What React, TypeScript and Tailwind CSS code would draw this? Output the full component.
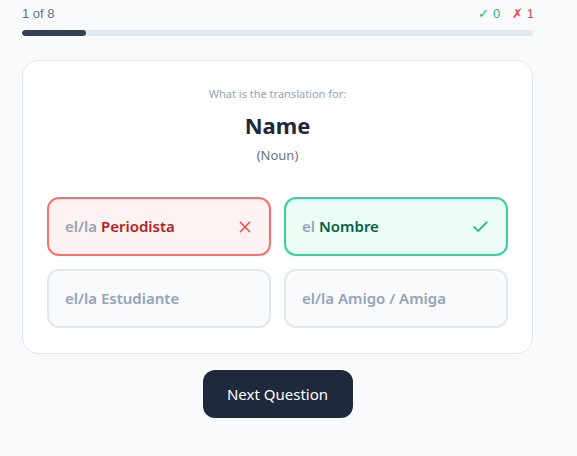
import React from 'react';

type Option = {
  article: string;
  word: string;
  state: 'wrong' | 'correct' | 'idle';
};

const options: Option[] = [
  { article: 'el/la', word: 'Periodista', state: 'wrong' },
  { article: 'el', word: 'Nombre', state: 'correct' },
  { article: 'el/la', word: 'Estudiante', state: 'idle' },
  { article: 'el/la', word: 'Amigo / Amiga', state: 'idle' },
];

const XIcon = () => (
  <svg width="16" height="16" viewBox="0 0 24 24" fill="none" stroke="currentColor" strokeWidth="2.2" strokeLinecap="round">
    <path d="M5 5l14 14M19 5L5 19" />
  </svg>
);

const CheckIcon = () => (
  <svg width="19" height="19" viewBox="0 0 24 24" fill="none" stroke="currentColor" strokeWidth="2" strokeLinecap="round" strokeLinejoin="round">
    <path d="M4 12.5l5 5L20 6.5" />
  </svg>
);

const OptionButton: React.FC<{ option: Option }> = ({ option }) => {
  const styles = {
    wrong: 'bg-[#fef2f2] border-[#f87171]',
    correct: 'bg-[#ecfdf5] border-[#34d399]',
    idle: 'bg-[#f8fafc] border-[#e2e8f0]',
  }[option.state];
  const wordColor = {
    wrong: 'text-[#b91c1c]',
    correct: 'text-[#065f46]',
    idle: 'text-[#94a3b8]',
  }[option.state];

  return (
    <button className={`h-[59px] flex items-center justify-between rounded-xl border-2 pl-4 pr-4 text-left text-[15px] font-semibold ${styles}`}>
      <span>
        <span className="text-[#94a3b8]">{option.article} </span>
        <span className={wordColor}>{option.word}</span>
      </span>
      {option.state === 'wrong' && (
        <span className="text-[#ef4444]">
          <XIcon />
        </span>
      )}
      {option.state === 'correct' && (
        <span className="text-[#10b981]">
          <CheckIcon />
        </span>
      )}
    </button>
  );
};

export default function App() {
  return (
    <div className="min-h-screen bg-[#f8fafc] font-['Noto_Sans',sans-serif]">
      <div className="w-[511px] ml-[22px] pt-[4px]">
        <div className="flex justify-between items-center text-[13px] leading-[20px] font-['Liberation_Sans',sans-serif]">
          <span className="text-[#64748b]">1 of 8</span>
          <span className="flex gap-3 mr-[-1px]">
            <span className="text-[#10b981]">✓ 0</span>
            <span className="text-[#ef4444]">✗ 1</span>
          </span>
        </div>
        <div className="mt-[6px] h-1.5 rounded-full bg-[#e2e8f0] overflow-hidden">
          <div className="h-full rounded-full bg-[#334155]" style={{ width: `${(1 / 8) * 100}%` }} />
        </div>

        <div className="mt-[24px] rounded-2xl border border-[#e2e8f0] bg-white px-6 pt-[25px] pb-[25px]">
          <div className="text-center">
            <p className="text-[11px] leading-4 text-[#94a3b8]">What is the translation for:</p>
            <h2 className="mt-[9px] text-[22px] leading-7 font-bold text-[#1e293b]">Name</h2>
            <p className="mt-[6px] text-[13px] leading-5 text-[#64748b]">(Noun)</p>
          </div>
          <div className="mt-[32px] grid grid-cols-2 gap-[13px]">
            {options.map((o) => (
              <OptionButton key={o.word} option={o} />
            ))}
          </div>
        </div>

        <div className="mt-4 flex justify-center">
          <button className="w-[150px] h-12 rounded-xl bg-[#1e293b] text-white text-[15px]">Next Question</button>
        </div>
      </div>
    </div>
  );
}
